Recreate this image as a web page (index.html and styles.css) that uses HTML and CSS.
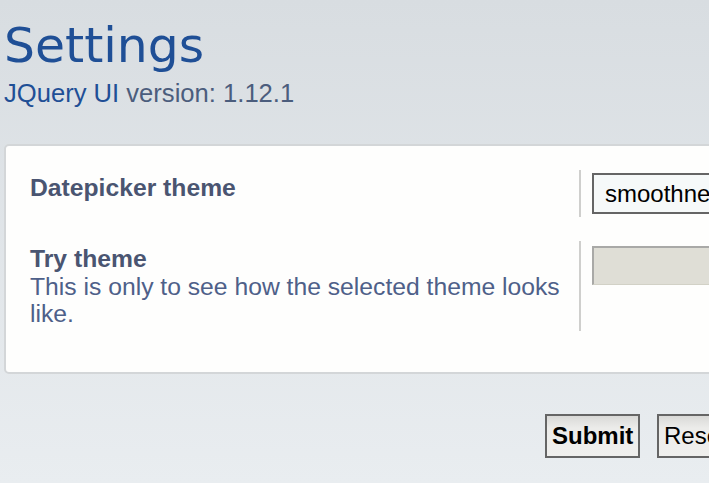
FILE: index.html
```html
<!DOCTYPE html>
<html>
<head>
<meta charset="utf-8">
<link rel="stylesheet" href="styles.css">
</head>
<body>
<header class="head">
  <h1 class="title">Settings</h1>
  <p class="subtitle"><a class="sublink">JQuery UI</a> version: 1.12.1</p>
</header>
<form class="form">
  <div class="card">
    <div class="row">
      <div class="label-cell">
        <div class="label">Datepicker theme</div>
      </div>
      <div class="value-cell">
        <div class="select">smoothness</div>
      </div>
    </div>
    <div class="row">
      <div class="label-cell">
        <div class="label">Try theme</div>
        <div class="desc">This is only to see how the selected theme looks like.</div>
      </div>
      <div class="value-cell">
        <div class="datebox"></div>
      </div>
    </div>
  </div>
  <div class="actions">
    <button type="button" class="btn btn-primary">Submit</button>
    <button type="button" class="btn">Reset</button>
  </div>
</form>
</body>
</html>
```
FILE: styles.css
```css
html, body {
  margin: 0;
  padding: 0;
  overflow: hidden;
  height: 100%;
}
body {
  background: linear-gradient(180deg, #d8dde1 0%, #e9edf0 100%);
  font-family: "Liberation Sans", Arial, sans-serif;
  padding-left: 4px;
  width: 1000px;
}
.head {
  padding-top: 18px;
}
.title {
  margin: 0;
  font-family: "DejaVu Sans", sans-serif;
  font-weight: normal;
  font-size: 48.8px;
  line-height: 56px;
  color: #1f4f96;
}
.subtitle {
  margin: 5px 0 0 0;
  font-size: 25.6px;
  line-height: 29px;
  color: #4b5d7d;
}
.sublink {
  color: #1f4f96;
}
.form {
  margin-top: 36px;
}
.card {
  width: 900px;
  background: #fefefd;
  border: 2px solid #d3d6d8;
  border-radius: 5px;
  padding: 24px 0 41px 0;
  display: flex;
  flex-direction: column;
  gap: 24px;
}
.row {
  display: flex;
}
.label-cell {
  width: 538px;
  padding: 4px 11px 3px 24px;
  font-size: 24.7px;
  line-height: 27.5px;
}
.label {
  font-weight: bold;
  color: #4a5571;
}
.desc {
  color: #4e6089;
}
.value-cell {
  border-left: 2px solid #cfcfcd;
  padding: 3px 11px;
}
.select {
  width: 240px;
  height: 37px;
  border: 2px solid #656565;
  background: #f6f9f9;
  color: #000;
  font-size: 24px;
  line-height: 37px;
  padding-left: 11px;
}
.datebox {
  width: 240px;
  height: 36px;
  margin-top: 2px;
  background: #dfded6;
  border-top: 2px solid #a9a9a7;
  border-left: 2px solid #a9a9a7;
  border-bottom: 1px solid #d2d1c6;
}
.actions {
  display: flex;
  gap: 17px;
  margin-top: 40px;
  padding-left: 541px;
}
.btn {
  font-family: "Liberation Sans", Arial, sans-serif;
  font-size: 24px;
  line-height: 28px;
  color: #000;
  height: 44px;
  padding: 6px 5px;
  border: 2px solid #656565;
  border-radius: 0;
  background: linear-gradient(180deg, #d9d9d7 0%, #ececea 30%, #efefed 100%);
}
.btn-primary {
  font-weight: bold;
  width: 95px;
}
```
